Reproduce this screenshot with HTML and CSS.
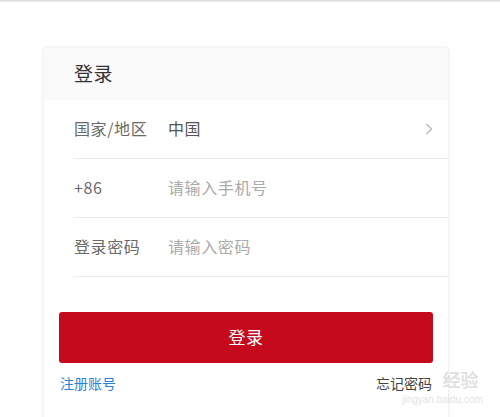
FILE: index.html
```html
<!DOCTYPE html>
<html lang="zh-CN">
<head>
<meta charset="utf-8">
<link rel="stylesheet" href="styles.css">
</head>
<body>
<div class="topbar"></div>
<div class="card">
  <div class="card-head">登录</div>
  <div class="form">
    <div class="row">
      <span class="label">国家/地区</span>
      <span class="value">中国</span>
      <svg class="chev" width="8" height="12" viewBox="0 0 8 12"><path d="M1.5 1 L6.5 6 L1.5 11" fill="none" stroke="#b8b8b8" stroke-width="1.3"/></svg>
    </div>
    <div class="row">
      <span class="label">+86</span>
      <span class="placeholder">请输入手机号</span>
    </div>
    <div class="row">
      <span class="label">登录密码</span>
      <span class="placeholder">请输入密码</span>
    </div>
  </div>
  <div class="actions">
    <button class="btn">登录</button>
    <div class="links">
      <a class="reg">注册账号</a>
      <a class="forgot">忘记密码</a>
    </div>
  </div>
</div>
<div class="watermark"><span class="wm1">经验</span><span class="wm2">jingyan.baidu.com</span></div>
</body>
</html>
```
FILE: styles.css
```css
html, body {
  margin: 0;
  padding: 0;
  background: #fff;
  font-family: "Noto Sans CJK SC", "Microsoft YaHei", sans-serif;
  height: 417px;
  overflow: hidden;
}
.topbar {
  height: 3px;
  background: linear-gradient(#d6d6d6, #f4f4f4 70%, #fff);
}
.card {
  margin: 45px 0 0 44px;
  width: 404px;
  height: 400px;
  background: #fff;
  box-shadow: 0 0 4px rgba(0,0,0,0.12);
  border-radius: 2px;
}
.card-head {
  height: 52px;
  background: #fafafa;
  padding-left: 30px;
  font-size: 19px;
  line-height: 50px;
  color: #333;
  letter-spacing: 0.5px;
}
.form {
  padding-left: 29px;
}
.row {
  height: 58px;
  border-bottom: 1px solid #ebebeb;
  display: flex;
  align-items: center;
  font-size: 16px;
  letter-spacing: 0.6px;
  padding-right: 15px;
  padding-bottom: 3px;
  box-sizing: border-box;
  height: 59px;
}
.label {
  width: 94px;
  padding-left: 1px;
  color: #6a6a6a;
}
.value {
  color: #555;
  flex: 1;
}
.placeholder {
  color: #aaa;
  flex: 1;
}
.chev {
  display: block;
  margin-top: 2px;
}
.actions {
  padding: 35px 15px 0 15px;
}
.btn {
  display: block;
  width: 100%;
  height: 51px;
  border: none;
  border-radius: 3px;
  background: #c50a1e;
  color: #fff;
  font-family: inherit;
  font-size: 17px;
  letter-spacing: 0.5px;
  padding: 0 0 3px 0;
}
.links {
  display: flex;
  justify-content: space-between;
  margin-top: 10px;
  font-size: 14px;
  padding: 0 1px;
}
.reg {
  color: #2a82d6;
}
.forgot {
  color: #444;
}
.watermark {
  position: absolute;
  left: 385px;
  top: 368px;
  width: 115px;
  text-align: center;
  color: rgba(200,200,200,0.55);
  pointer-events: none;
}
.wm1 {
  display: block;
  font-size: 18px;
  font-weight: bold;
  padding-left: 36px;
  line-height: 22px;
}
.wm2 {
  display: block;
  font-size: 10px;
  line-height: 12px;
  margin-top: 4px;
  font-family: "Liberation Sans", sans-serif;
}
```
